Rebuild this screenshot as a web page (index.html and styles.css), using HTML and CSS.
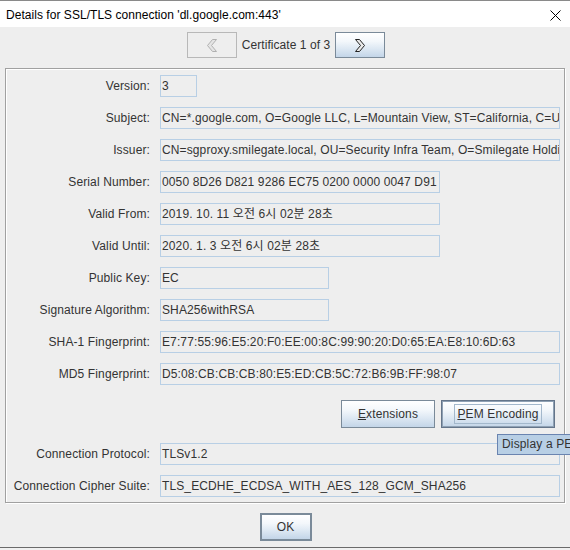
FILE: index.html
```html
<!DOCTYPE html>
<html>
<head>
<meta charset="utf-8">
<link rel="stylesheet" href="styles.css">
</head>
<body>
<div class="window">
  <div class="titlebar">
    <span class="title">Details for SSL/TLS connection 'dl.google.com:443'</span>
    <svg class="close" width="11" height="11" viewBox="0 0 11 11"><path d="M0.5 0.5 L10.5 10.5 M10.5 0.5 L0.5 10.5" stroke="#000" stroke-width="1" fill="none"/></svg>
  </div>
  <div class="content">
    <div class="nav">
      <div class="btn btn-disabled nav-btn">
        <svg width="10" height="13" viewBox="0 0 10 13"><path d="M9.5 0.5 H5.5 L0.5 6.5 L5.5 12.5 H9.5 L4.5 6.5 Z" fill="#e4e4e4" stroke="#b0b0b0" stroke-width="1"/></svg>
      </div>
      <span class="nav-text">Certificate 1 of 3</span>
      <div class="btn nav-btn">
        <svg width="10" height="13" viewBox="0 0 10 13"><path d="M0.5 0.5 H4.5 L9.5 6.5 L4.5 12.5 H0.5 L5.5 6.5 Z" fill="#eaeaea" stroke="#222" stroke-width="1"/></svg>
      </div>
    </div>

    <div class="panel">
      <div class="grid">
        <span class="label">Version:</span>
        <div class="field w-version">3</div>

        <span class="label">Subject:</span>
        <div class="field w-full">CN=*.google.com, O=Google LLC, L=Mountain View, ST=California, C=US</div>

        <span class="label">Issuer:</span>
        <div class="field w-full">CN=sgproxy.smilegate.local, OU=Security Infra Team, O=Smilegate Holdings</div>

        <span class="label">Serial Number:</span>
        <div class="field w-mid">0050 8D26 D821 9286 EC75 0200 0000 0047 D91</div>

        <span class="label">Valid From:</span>
        <div class="field w-mid">2019. 10. 11 오전 6시 02분 28초</div>

        <span class="label">Valid Until:</span>
        <div class="field w-mid">2020. 1. 3 오전 6시 02분 28초</div>

        <span class="label">Public Key:</span>
        <div class="field w-small">EC</div>

        <span class="label">Signature Algorithm:</span>
        <div class="field w-small">SHA256withRSA</div>

        <span class="label">SHA-1 Fingerprint:</span>
        <div class="field w-full">E7:77:55:96:E5:20:F0:EE:00:8C:99:90:20:D0:65:EA:E8:10:6D:63</div>

        <span class="label">MD5 Fingerprint:</span>
        <div class="field w-full">D5:08:CB:CB:CB:80:E5:ED:CB:5C:72:B6:9B:FF:98:07</div>

        <div class="actions">
          <div class="btn act-btn ext-btn"><span><u>E</u>xtensions</span></div>
          <div class="btn act-btn pem-btn"><span class="focus"><u>P</u>EM Encoding</span></div>
        </div>

        <span class="label">Connection Protocol:</span>
        <div class="field w-full">TLSv1.2</div>

        <span class="label">Connection Cipher Suite:</span>
        <div class="field w-full">TLS_ECDHE_ECDSA_WITH_AES_128_GCM_SHA256</div>
      </div>
    </div>

    <div class="footer">
      <div class="btn ok-btn">OK</div>
    </div>
  </div>
  <div class="tooltip">Display a PEM encoding</div>
</div>
</body>
</html>
```

FILE: styles.css
```css
html, body {
  margin: 0;
  padding: 0;
}
body {
  width: 570px;
  height: 550px;
  overflow: hidden;
  background: #f0f0f0;
  font-family: "Liberation Sans", Arial, "Noto Sans CJK KR", sans-serif;
  font-size: 12px;
  color: #333333;
}
.window {
  position: relative;
  width: 570px;
  height: 548px;
  box-sizing: border-box;
  background: #eeeeee;
  border-bottom: 1px solid #6a6a6a;
  overflow: hidden;
}
.titlebar {
  height: 27px;
  box-sizing: border-box;
  border-top: 1px solid #8a8a8a;
  background: #ffffff;
  display: flex;
  align-items: flex-start;
  justify-content: space-between;
  padding: 2px 9px 0 6px;
  line-height: 24px;
}
.title {
  color: #000;
  font-size: 12px;
  letter-spacing: 0.04px;
}
.close {
  margin-top: 7px;
}
.content {
  display: flex;
  flex-direction: column;
}
.nav {
  margin-top: 5px;
  display: flex;
  justify-content: center;
  align-items: center;
  gap: 5px;
  height: 26px;
  padding-left: 2px;
}
.nav-text {
  color: #333;
  letter-spacing: 0.05px;
}
.btn {
  box-sizing: border-box;
  border: 1px solid #7a8a99;
  background: linear-gradient(#ffffff 0%, #f3f7fb 35%, #dde8f3 65%, #c3d5e8 100%);
  display: flex;
  align-items: center;
  justify-content: center;
  color: #333;
  letter-spacing: 0.15px;
}
.btn-disabled {
  border-color: #b8b8b8;
  background: #eeeeee;
}
.nav-btn {
  width: 50px;
  height: 26px;
}
.panel {
  margin: 10px 0 0 5px;
  width: 560px;
  height: 435px;
  box-sizing: border-box;
  border: 1px solid #a0a0a0;
  box-shadow: inset 1px 1px 0 #ffffff, 1px 1px 0 #ffffff;
  padding: 6px 5px 5px 1px;
}
.grid {
  display: grid;
  grid-template-columns: 143px 1fr;
  grid-auto-rows: auto;
  column-gap: 10px;
  row-gap: 10px;
  letter-spacing: 0.12px;
}
.label {
  text-align: right;
  height: 22px;
  line-height: 22px;
  white-space: nowrap;
}
.field {
  box-sizing: border-box;
  height: 22px;
  border: 1px solid #b8cfe5;
  padding: 0 0 0 1px;
  line-height: 20px;
  white-space: nowrap;
  overflow: hidden;
}
.w-version { width: 37px; }
.w-full { width: 400px; }
.w-mid { width: 280px; }
.w-small { width: 169px; }
.actions {
  grid-column: 1 / 3;
  height: 28px;
  margin-top: 5px;
  margin-bottom: 5px;
  display: flex;
  justify-content: flex-end;
  gap: 6px;
  padding-right: 5px;
}
.act-btn {
  height: 28px;
}
.ext-btn {
  width: 94px;
}
.pem-btn {
  width: 114px;
  border-color: #64758a;
  box-shadow: inset 0 0 0 1px #8fa1b4;
}
.focus {
  border: 1px solid #a3b8cc;
  padding: 1px 2px;
  line-height: 16px;
}
.footer {
  display: flex;
  justify-content: center;
  margin-top: 10px;
  padding-left: 1px;
}
.ok-btn {
  width: 52px;
  height: 28px;
  border: 2px solid #7a8a99;
}
.tooltip {
  position: absolute;
  left: 497px;
  top: 434px;
  height: 21px;
  box-sizing: border-box;
  padding: 0 4px;
  line-height: 19px;
  background: #b8cfe5;
  border: 1px solid #6a84b0;
  color: #333;
  white-space: nowrap;
  letter-spacing: 0.15px;
}
```
